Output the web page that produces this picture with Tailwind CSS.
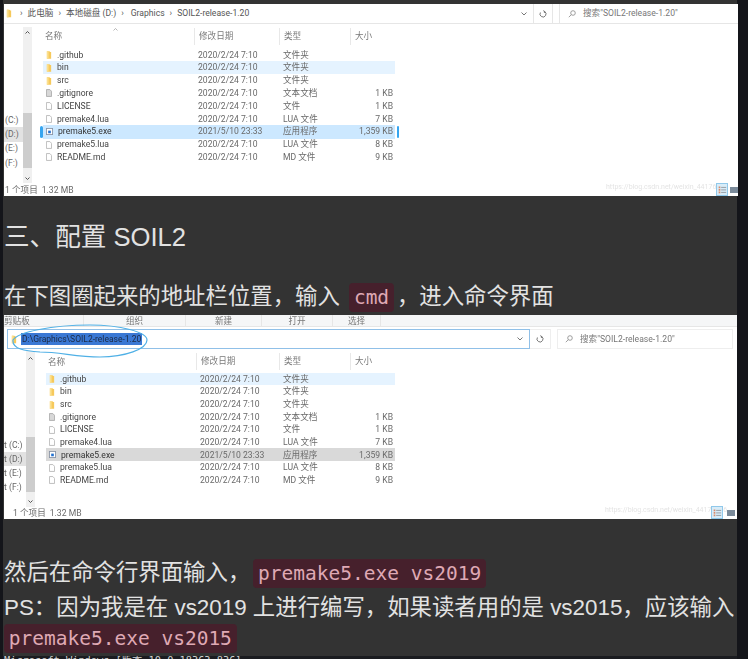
<!DOCTYPE html>
<html lang="en">
<head>
    <meta charset="UTF-8">
    <meta name="viewport" content="width=device-width, initial-scale=1.0">
    <title>配置 SOIL2</title>
    <script src="https://cdn.jsdelivr.net/npm/@tailwindcss/browser@4"></script>
</head>
<body class="bg-[#14151a] h-[659px] overflow-hidden font-['Liberation_Sans','Noto_Sans_CJK_SC',sans-serif]">
<svg class="hidden">
    <symbol id="folder" viewBox="0 0 7 9"><path d="M1 0h3l1 1h1v8H1z" fill="#f6c95c"/><path d="M1 0h2v9H1z" fill="#fbe08f"/></symbol>
    <symbol id="page" viewBox="0 0 7 9"><path d="M.5.5h4l2 2v6h-6z" fill="#fff" stroke="#b4b4b4"/></symbol>
    <symbol id="text" viewBox="0 0 7 9"><path d="M.5.5h4l2 2v6h-6z" fill="#d8d8d8" stroke="#a8a8a8"/></symbol>
    <symbol id="exe" viewBox="0 0 8 8"><rect x=".5" y=".5" width="7" height="7" fill="#fff" stroke="#8a94a6"/><rect x="2.500" y="3" width="3" height="3" fill="#1f6fd0"/></symbol>
    <symbol id="details" viewBox="0 0 12 13"><path d="M2 3h2v2H2zM2 6h2v2H2zM2 9h2v2H2z" fill="#d98a6a"/><path d="M5 4h6M5 7h6M5 10h6" stroke="#8a8f96"/></symbol>
</svg>

<main class="ml-[3px] w-[734px] pt-[4px] bg-[#333333] h-[656px] relative">

    <!-- first explorer shot -->
    <section class="ml-px w-[734px] h-[192px] bg-white flex flex-col blur-[0.4px] text-[8.6px] text-[#6a6a6a] font-['Roboto','Noto_Sans_CJK_SC',sans-serif] relative">
        <div class="h-[20px] flex items-center border-b border-[#e6e6e6] shrink-0">
            <svg class="w-[6px] h-[9px] ml-[2px]"><use href="#folder"/></svg>
            <div class="flex items-center w-[508px] pl-[8px] text-[8.6px] text-[#555] gap-[5px]">
                <span>›</span><span>此电脑</span><span>›</span><span>本地磁盘 (D:)</span><span>›</span><span class="ml-[2px]">Graphics</span><span>›</span><span>SOIL2-release-1.20</span>
            </div>
            <svg class="w-[6px] h-[4px] ml-[1px]" viewBox="0 0 6 4"><path d="M.5.5 3 3 5.500.5" fill="none" stroke="#777"/></svg>
            <div class="h-full ml-[6px] w-[20px] border-x border-[#e6e6e6] flex items-center justify-center">
                <svg class="w-[8px] h-[8px]" viewBox="0 0 8 8"><path d="M4 1a3 3 0 1 1-3 3M2.500 1h2v1.500" fill="none" stroke="#666" stroke-width=".8" transform="rotate(30 4 4)"/></svg>
            </div>
            <div class="h-full ml-[6px] flex-1 border-l border-[#e6e6e6] flex items-center pl-[8px] gap-[7px] text-[8.6px] text-[#777]">
                <svg class="w-[8px] h-[8px]" viewBox="0 0 8 8"><circle cx="5" cy="3" r="2.300" fill="none" stroke="#888" stroke-width=".8"/><path d="M3.300 4.700.8 7.200" stroke="#888" stroke-width=".8"/></svg>
                <span>搜索"SOIL2-release-1.20"</span>
            </div>
        </div>
        <div class="flex flex-1">
            <div class="w-[19px] pt-[89px] flex flex-col text-[#666]">
                <div class="h-[14.300px] flex items-center pl-[1px]">(C:)</div>
                <div class="h-[14.300px] flex items-center pl-[1px] bg-[#e2e2e2]">(D:)</div>
                <div class="h-[14.300px] flex items-center pl-[1px]">(E:)</div>
                <div class="h-[14.300px] flex items-center pl-[1px]">(F:)</div>
            </div>
            <div class="w-[9px] h-[156px] mt-[3px] bg-[#f0f0f0] flex flex-col items-center">
                <svg class="w-[5px] h-[3px] mt-[4px]" viewBox="0 0 5 3"><path d="M.5 2.500 2.500.5l2 2" fill="none" stroke="#555"/></svg>
                <div class="w-full h-[55px] mt-[79px] bg-[#cdcdcd]"></div>
                <svg class="w-[5px] h-[3px] mt-[9px]" viewBox="0 0 5 3"><path d="M.5.5l2 2 2-2" fill="none" stroke="#555"/></svg>
            </div>
            <div class="ml-[11px] w-[352px] relative">
                <div class="h-[24.600px] grid grid-cols-[151px_85px_71px_45px] items-center text-[#7a7a7a] relative">
                    <span class="pl-[2px]">名称</span>
                    <span class="pl-[4px] border-l border-[#e8e8e8] h-[17px] flex items-center">修改日期</span>
                    <span class="pl-[4px] border-l border-[#e8e8e8] h-[17px] flex items-center">类型</span>
                    <span class="pl-[4px] border-l border-[#e8e8e8] h-[17px] flex items-center">大小</span>
                    <svg class="absolute left-[70px] top-[4px] w-[5px] h-[3px]" viewBox="0 0 5 3"><path d="M.5 2.500 2.500.5l2 2" fill="none" stroke="#999" stroke-width=".7"/></svg>
                </div>
                <div class="h-[12.800px] grid grid-cols-[151px_85px_71px_45px] items-center"><span class="flex items-center gap-[5px] pl-[3px] text-[#444]"><svg class="w-[6px] h-[8px]"><use href="#folder"/></svg>.github</span><span class="pl-[4px]">2020/2/24 7:10</span><span class="pl-[4px]">文件夹</span><span></span></div>
                <div class="h-[12.800px] grid grid-cols-[151px_85px_71px_45px] items-center bg-[#e5f3ff]"><span class="flex items-center gap-[5px] pl-[3px] text-[#444]"><svg class="w-[6px] h-[8px]"><use href="#folder"/></svg>bin</span><span class="pl-[4px]">2020/2/24 7:10</span><span class="pl-[4px]">文件夹</span><span></span></div>
                <div class="h-[12.800px] grid grid-cols-[151px_85px_71px_45px] items-center"><span class="flex items-center gap-[5px] pl-[3px] text-[#444]"><svg class="w-[6px] h-[8px]"><use href="#folder"/></svg>src</span><span class="pl-[4px]">2020/2/24 7:10</span><span class="pl-[4px]">文件夹</span><span></span></div>
                <div class="h-[12.800px] grid grid-cols-[151px_85px_71px_45px] items-center"><span class="flex items-center gap-[5px] pl-[3px] text-[#444]"><svg class="w-[6px] h-[8px]"><use href="#text"/></svg>.gitignore</span><span class="pl-[4px]">2020/2/24 7:10</span><span class="pl-[4px]">文本文档</span><span class="text-right pr-[2px]">1 KB</span></div>
                <div class="h-[12.800px] grid grid-cols-[151px_85px_71px_45px] items-center"><span class="flex items-center gap-[5px] pl-[3px] text-[#444]"><svg class="w-[6px] h-[8px]"><use href="#page"/></svg>LICENSE</span><span class="pl-[4px]">2020/2/24 7:10</span><span class="pl-[4px]">文件</span><span class="text-right pr-[2px]">1 KB</span></div>
                <div class="h-[12.800px] grid grid-cols-[151px_85px_71px_45px] items-center"><span class="flex items-center gap-[5px] pl-[3px] text-[#444]"><svg class="w-[6px] h-[8px]"><use href="#page"/></svg>premake4.lua</span><span class="pl-[4px]">2020/2/24 7:10</span><span class="pl-[4px]">LUA 文件</span><span class="text-right pr-[2px]">7 KB</span></div>
                <div class="h-[14px] -my-[0.600px] grid grid-cols-[151px_85px_71px_45px] items-center bg-[#cce8ff] relative"><span class="flex items-center gap-[5px] pl-[3px] text-[#333]"><svg class="w-[7px] h-[7px]"><use href="#exe"/></svg>premake5.exe</span><span class="pl-[4px]">2021/5/10 23:33</span><span class="pl-[4px]">应用程序</span><span class="text-right pr-[2px]">1,359 KB</span>
                    <span class="absolute -left-[3px] top-[1px] w-[3px] h-[12px] rounded-full bg-[#35a5f0]"></span>
                    <span class="absolute -right-[4px] top-[1px] w-[2px] h-[12px] rounded-full bg-[#35a5f0]"></span>
                </div>
                <div class="h-[12.800px] grid grid-cols-[151px_85px_71px_45px] items-center"><span class="flex items-center gap-[5px] pl-[3px] text-[#444]"><svg class="w-[6px] h-[8px]"><use href="#page"/></svg>premake5.lua</span><span class="pl-[4px]">2020/2/24 7:10</span><span class="pl-[4px]">LUA 文件</span><span class="text-right pr-[2px]">8 KB</span></div>
                <div class="h-[12.800px] grid grid-cols-[151px_85px_71px_45px] items-center"><span class="flex items-center gap-[5px] pl-[3px] text-[#444]"><svg class="w-[6px] h-[8px]"><use href="#page"/></svg>README.md</span><span class="pl-[4px]">2020/2/24 7:10</span><span class="pl-[4px]">MD 文件</span><span class="text-right pr-[2px]">9 KB</span></div>
            </div>
        </div>
        <div class="h-[11px] pl-px flex items-center gap-[4px] shrink-0"><span>1 个项目</span><span>1.32 MB</span></div>
        <span class="absolute left-[602px] top-[177px] text-[7px] leading-[12px] text-[#e4e4e4]">https://blog.csdn.net/weixin_44176696</span>
        <div class="absolute left-[712px] top-[179px] w-[12px] h-[13px] bg-[#d8ecf8] border border-[#90c8ea]"><svg class="w-full h-full"><use href="#details"/></svg></div>
        <div class="absolute left-[726px] top-[183px] w-[8px] h-[6px] bg-[#7a8a9a]"></div>
    </section>

    <section class="text-[#e2e2e2] h-[119px] overflow-hidden">
        <h2 class="pt-[24px] pl-px text-[25.600px] leading-[34px]">三、配置 SOIL2</h2>
        <p class="mt-[26px] pl-px text-[22.400px] leading-[33.600px] whitespace-nowrap">在下图圈起来的地址栏位置，输入 <code class="mx-[3px] px-[4.800px] py-[3px] rounded-[4px] bg-[#46202c] text-[#dfa9b4] text-[19.500px] font-['DejaVu_Sans_Mono',monospace]">cmd</code>，进入命令界面</p>
    </section>

    <!-- second explorer shot, with the address bar circled -->
    <section class="ml-px w-[733px] h-[204px] bg-white flex flex-col blur-[0.4px] text-[8.6px] text-[#6a6a6a] font-['Roboto','Noto_Sans_CJK_SC',sans-serif] relative">
        <div class="h-[12px] bg-[#f5f6f7] border-b border-[#e6e6e6] grid grid-cols-[80px_102px_76px_71px_48px_1fr] text-center shrink-0 text-[#777] leading-[12px]">
            <span class="text-left border-r border-[#e6e6e6]">剪贴板</span>
            <span class="border-r border-[#e6e6e6]">组织</span>
            <span class="border-r border-[#e6e6e6]">新建</span>
            <span class="border-r border-[#e6e6e6]">打开</span>
            <span class="border-r border-[#e6e6e6]">选择</span>
            <span></span>
        </div>
        <div class="h-[24px] flex items-center shrink-0">
            <div class="ml-[3px] w-[523px] h-[20px] border border-[#90c0e8] flex items-center pl-[3px]">
                <svg class="w-[6px] h-[9px]"><use href="#folder"/></svg>
                <span class="ml-[4px] bg-[#3a78d4] text-[#1c2a44] text-[8.500px] leading-[12px] px-px">D:\Graphics\SOIL2-release-1.20</span>
                <svg class="w-[6px] h-[4px] ml-auto mr-[6px]" viewBox="0 0 6 4"><path d="M.5.5 3 3 5.500.5" fill="none" stroke="#777"/></svg>
            </div>
            <div class="w-[21px] h-[20px] border border-[#eeeeee] border-l-0 flex items-center justify-center">
                <svg class="w-[8px] h-[8px]" viewBox="0 0 8 8"><path d="M4 1a3 3 0 1 1-3 3M2.500 1h2v1.500" fill="none" stroke="#666" stroke-width=".8" transform="rotate(30 4 4)"/></svg>
            </div>
            <div class="ml-[6px] w-[176px] h-[20px] border border-[#eeeeee] flex items-center pl-[7px] gap-[7px] text-[#777]">
                <svg class="w-[8px] h-[8px]" viewBox="0 0 8 8"><circle cx="5" cy="3" r="2.300" fill="none" stroke="#888" stroke-width=".8"/><path d="M3.300 4.700.8 7.200" stroke="#888" stroke-width=".8"/></svg>
                <span>搜索"SOIL2-release-1.20"</span>
            </div>
        </div>
        <div class="flex flex-1">
            <div class="w-[22px] pt-[87px] flex flex-col text-[#666]">
                <div class="h-[14.200px] flex items-center">t (C:)</div>
                <div class="h-[14.200px] flex items-center bg-[#e2e2e2]">t (D:)</div>
                <div class="h-[14.200px] flex items-center">t (E:)</div>
                <div class="h-[14.200px] flex items-center">t (F:)</div>
            </div>
            <div class="w-[9px] h-[156px] bg-[#f0f0f0] flex flex-col items-center">
                <svg class="w-[5px] h-[3px] mt-[6px]" viewBox="0 0 5 3"><path d="M.5 2.500 2.500.5l2 2" fill="none" stroke="#555"/></svg>
                <div class="w-full h-[55px] mt-[77px] bg-[#cdcdcd]"></div>
                <svg class="w-[5px] h-[3px] mt-[8px]" viewBox="0 0 5 3"><path d="M.5.5l2 2 2-2" fill="none" stroke="#555"/></svg>
            </div>
            <div class="ml-[11px] w-[349px]">
                <div class="h-[21.900px] grid grid-cols-[150px_83px_71px_45px] items-center text-[#7a7a7a]">
                    <span class="pl-[2px]">名称</span>
                    <span class="pl-[4px] border-l border-[#e8e8e8] h-[17px] flex items-center">修改日期</span>
                    <span class="pl-[4px] border-l border-[#e8e8e8] h-[17px] flex items-center">类型</span>
                    <span class="pl-[4px] border-l border-[#e8e8e8] h-[17px] flex items-center">大小</span>
                </div>
                <div class="h-[12.600px] grid grid-cols-[150px_83px_71px_45px] items-center bg-[#e5f3ff]"><span class="flex items-center gap-[5px] pl-[3px] text-[#444]"><svg class="w-[6px] h-[8px]"><use href="#folder"/></svg>.github</span><span class="pl-[4px]">2020/2/24 7:10</span><span class="pl-[4px]">文件夹</span><span></span></div>
                <div class="h-[12.600px] grid grid-cols-[150px_83px_71px_45px] items-center"><span class="flex items-center gap-[5px] pl-[3px] text-[#444]"><svg class="w-[6px] h-[8px]"><use href="#folder"/></svg>bin</span><span class="pl-[4px]">2020/2/24 7:10</span><span class="pl-[4px]">文件夹</span><span></span></div>
                <div class="h-[12.600px] grid grid-cols-[150px_83px_71px_45px] items-center"><span class="flex items-center gap-[5px] pl-[3px] text-[#444]"><svg class="w-[6px] h-[8px]"><use href="#folder"/></svg>src</span><span class="pl-[4px]">2020/2/24 7:10</span><span class="pl-[4px]">文件夹</span><span></span></div>
                <div class="h-[12.600px] grid grid-cols-[150px_83px_71px_45px] items-center"><span class="flex items-center gap-[5px] pl-[3px] text-[#444]"><svg class="w-[6px] h-[8px]"><use href="#text"/></svg>.gitignore</span><span class="pl-[4px]">2020/2/24 7:10</span><span class="pl-[4px]">文本文档</span><span class="text-right pr-[2px]">1 KB</span></div>
                <div class="h-[12.600px] grid grid-cols-[150px_83px_71px_45px] items-center"><span class="flex items-center gap-[5px] pl-[3px] text-[#444]"><svg class="w-[6px] h-[8px]"><use href="#page"/></svg>LICENSE</span><span class="pl-[4px]">2020/2/24 7:10</span><span class="pl-[4px]">文件</span><span class="text-right pr-[2px]">1 KB</span></div>
                <div class="h-[12.600px] grid grid-cols-[150px_83px_71px_45px] items-center"><span class="flex items-center gap-[5px] pl-[3px] text-[#444]"><svg class="w-[6px] h-[8px]"><use href="#page"/></svg>premake4.lua</span><span class="pl-[4px]">2020/2/24 7:10</span><span class="pl-[4px]">LUA 文件</span><span class="text-right pr-[2px]">7 KB</span></div>
                <div class="h-[13px] grid grid-cols-[150px_83px_71px_45px] items-center bg-[#d9d9d9]"><span class="flex items-center gap-[5px] pl-[3px] text-[#333]"><svg class="w-[7px] h-[7px]"><use href="#exe"/></svg>premake5.exe</span><span class="pl-[4px]">2021/5/10 23:33</span><span class="pl-[4px]">应用程序</span><span class="text-right pr-[2px]">1,359 KB</span></div>
                <div class="h-[12.600px] grid grid-cols-[150px_83px_71px_45px] items-center"><span class="flex items-center gap-[5px] pl-[3px] text-[#444]"><svg class="w-[6px] h-[8px]"><use href="#page"/></svg>premake5.lua</span><span class="pl-[4px]">2020/2/24 7:10</span><span class="pl-[4px]">LUA 文件</span><span class="text-right pr-[2px]">8 KB</span></div>
                <div class="h-[12.600px] grid grid-cols-[150px_83px_71px_45px] items-center"><span class="flex items-center gap-[5px] pl-[3px] text-[#444]"><svg class="w-[6px] h-[8px]"><use href="#page"/></svg>README.md</span><span class="pl-[4px]">2020/2/24 7:10</span><span class="pl-[4px]">MD 文件</span><span class="text-right pr-[2px]">9 KB</span></div>
            </div>
        </div>
        <div class="h-[12px] pl-[9px] flex items-center gap-[4px] shrink-0"><span>1 个项目</span><span>1.32 MB</span></div>
        <span class="absolute left-[601px] top-[189px] text-[7px] leading-[12px] text-[#e4e4e4]">https://blog.csdn.net/weixin_44176696</span>
        <div class="absolute left-[707px] top-[191px] w-[12px] h-[13px] bg-[#d8ecf8] border border-[#90c8ea]"><svg class="w-full h-full"><use href="#details"/></svg></div>
        <div class="absolute left-[723px] top-[195px] w-[8px] h-[6px] bg-[#7a8a9a]"></div>
        <svg class="absolute left-[8px] top-[8px] w-[136px] h-[36px]" viewBox="0 0 136 36"><path d="M1 17C6 9 40 2 78 2c30 0 57 7 57 15 0 9-22 17-47 17-24 0-40-5-60-5-15-1-28-3-27-12Z" fill="none" stroke="#4fb0e6" stroke-width="1.200"/></svg>
    </section>

    <section class="text-[#e2e2e2] pl-px text-[22.400px] leading-[33.600px] pt-[37px]">
        <p>然后在命令行界面输入，<code class="mx-[3px] px-[4.800px] py-[3px] rounded-[4px] bg-[#46202c] text-[#dfa9b4] text-[19.500px] font-['DejaVu_Sans_Mono',monospace]">premake5.exe vs2019</code></p>
        <p class="whitespace-nowrap">PS：因为我是在 vs2019 上进行编写，如果读者用的是 vs2015，应该输入</p>
        <p class="-mt-[3px]"><code class="px-[4.800px] py-[3px] rounded-[4px] bg-[#46202c] text-[#dfa9b4] text-[19.500px] font-['DejaVu_Sans_Mono',monospace]">premake5.exe vs2015</code></p>
    </section>
</main>
<div class="ml-[3px] w-[734px] pl-px bg-[#1b1c20] text-[#cfcfcf] text-[10.300px] leading-[9px] font-['DejaVu_Sans_Mono','Noto_Sans_CJK_SC',monospace]">Microsoft Windows [版本 10.0.18363.836]</div>
</body>
</html>
